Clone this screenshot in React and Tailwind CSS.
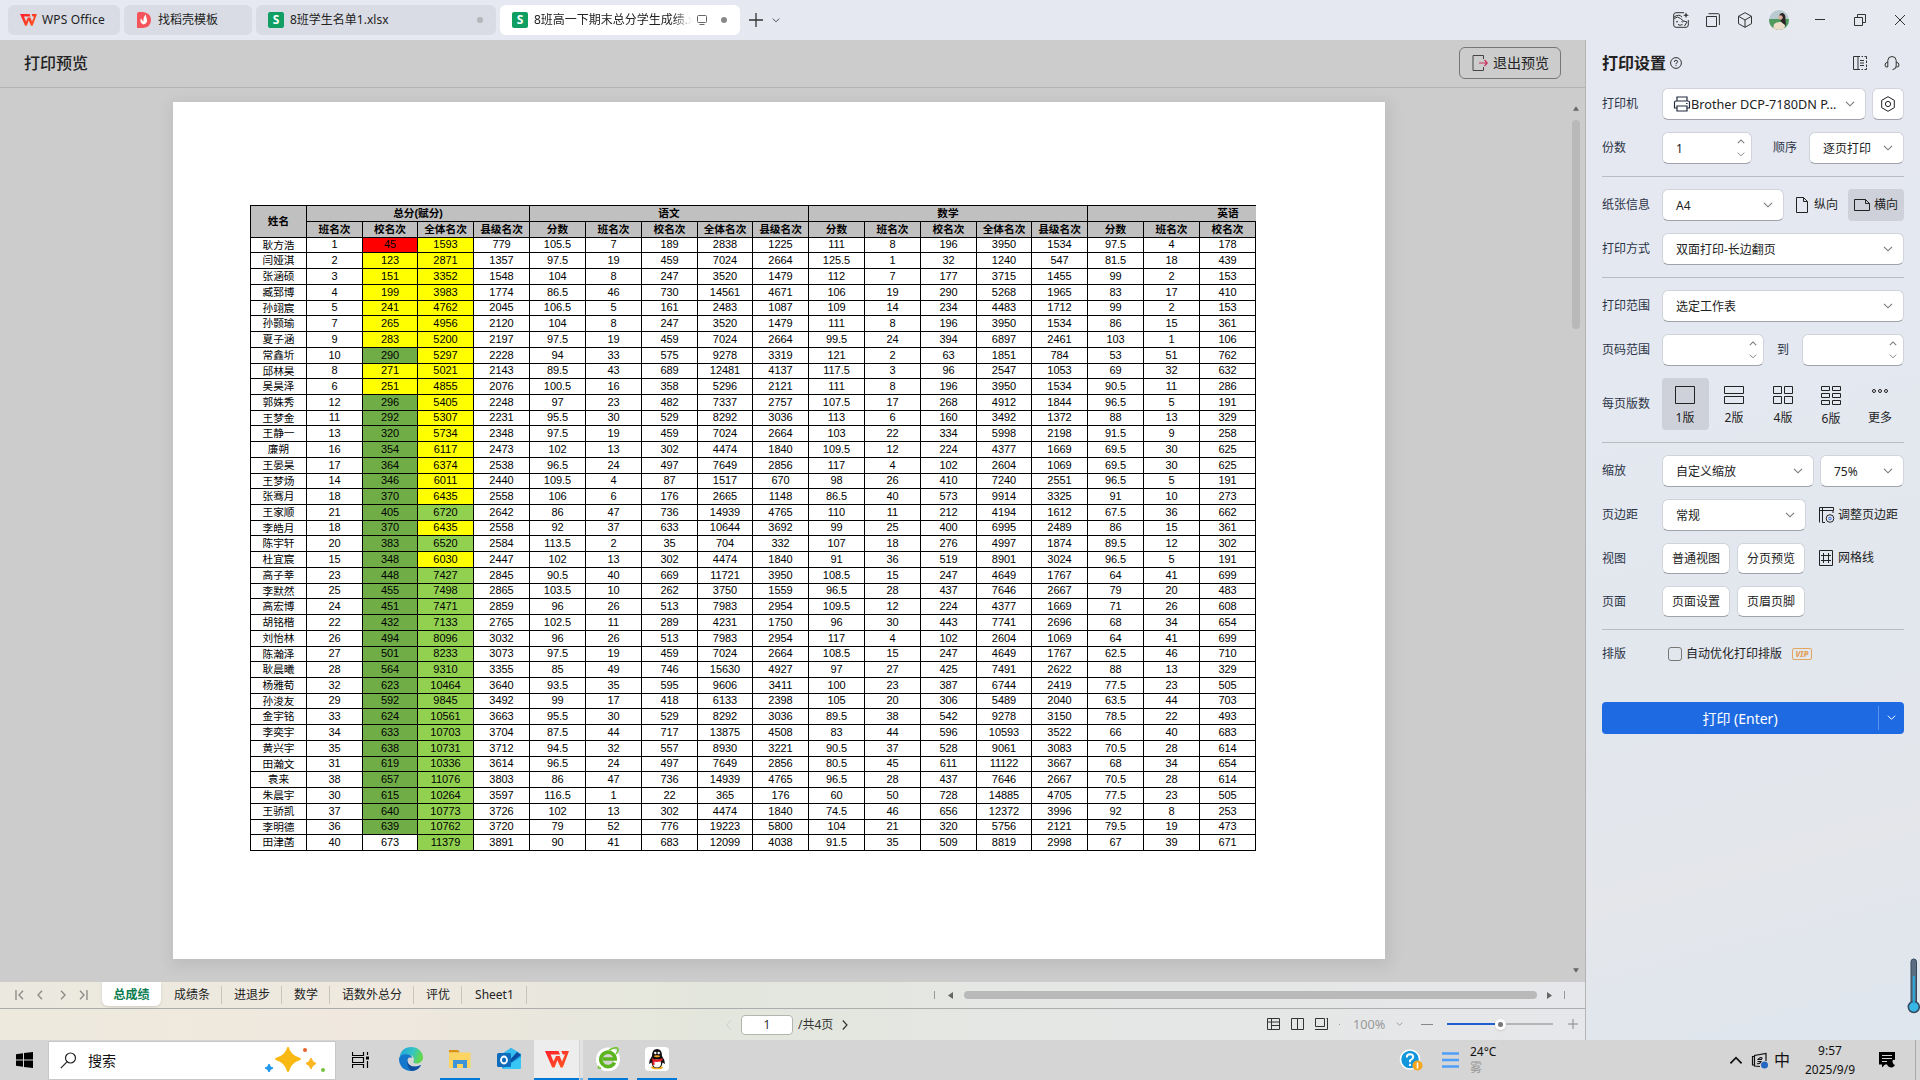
import React from "react";

const names = "耿方浩 闫娅淇 张涵硕 臧郅博 孙翊宸 孙颢瑜 夏子涵 常鑫圻 邱林昊 吴昊泽 郭姝秀 王梦金 王静一 廉朔 王晏昊 王梦炀 张骞月 王家顺 李皓月 陈宇轩 杜宜宸 高子莘 李默然 高宏博 胡铭楷 刘怡林 陈瀚泽 耿晨曦 杨雅荀 孙浚友 金宇铭 李奕宇 黄兴宇 田瀚文 袁来 朱晨宇 王骄凯 李明德 田津菡".split(" ");

const scores = `1 45 1593 779 105.5 7 189 2838 1225 111 8 196 3950 1534 97.5 4 178
2 123 2871 1357 97.5 19 459 7024 2664 125.5 1 32 1240 547 81.5 18 439
3 151 3352 1548 104 8 247 3520 1479 112 7 177 3715 1455 99 2 153
4 199 3983 1774 86.5 46 730 14561 4671 106 19 290 5268 1965 83 17 410
5 241 4762 2045 106.5 5 161 2483 1087 109 14 234 4483 1712 99 2 153
7 265 4956 2120 104 8 247 3520 1479 111 8 196 3950 1534 86 15 361
9 283 5200 2197 97.5 19 459 7024 2664 99.5 24 394 6897 2461 103 1 106
10 290 5297 2228 94 33 575 9278 3319 121 2 63 1851 784 53 51 762
8 271 5021 2143 89.5 43 689 12481 4137 117.5 3 96 2547 1053 69 32 632
6 251 4855 2076 100.5 16 358 5296 2121 111 8 196 3950 1534 90.5 11 286
12 296 5405 2248 97 23 482 7337 2757 107.5 17 268 4912 1844 96.5 5 191
11 292 5307 2231 95.5 30 529 8292 3036 113 6 160 3492 1372 88 13 329
13 320 5734 2348 97.5 19 459 7024 2664 103 22 334 5998 2198 91.5 9 258
16 354 6117 2473 102 13 302 4474 1840 109.5 12 224 4377 1669 69.5 30 625
17 364 6374 2538 96.5 24 497 7649 2856 117 4 102 2604 1069 69.5 30 625
14 346 6011 2440 109.5 4 87 1517 670 98 26 410 7240 2551 96.5 5 191
18 370 6435 2558 106 6 176 2665 1148 86.5 40 573 9914 3325 91 10 273
21 405 6720 2642 86 47 736 14939 4765 110 11 212 4194 1612 67.5 36 662
18 370 6435 2558 92 37 633 10644 3692 99 25 400 6995 2489 86 15 361
20 383 6520 2584 113.5 2 35 704 332 107 18 276 4997 1874 89.5 12 302
15 348 6030 2447 102 13 302 4474 1840 91 36 519 8901 3024 96.5 5 191
23 448 7427 2845 90.5 40 669 11721 3950 108.5 15 247 4649 1767 64 41 699
25 455 7498 2865 103.5 10 262 3750 1559 96.5 28 437 7646 2667 79 20 483
24 451 7471 2859 96 26 513 7983 2954 109.5 12 224 4377 1669 71 26 608
22 432 7133 2765 102.5 11 289 4231 1750 96 30 443 7741 2696 68 34 654
26 494 8096 3032 96 26 513 7983 2954 117 4 102 2604 1069 64 41 699
27 501 8233 3073 97.5 19 459 7024 2664 108.5 15 247 4649 1767 62.5 46 710
28 564 9310 3355 85 49 746 15630 4927 97 27 425 7491 2622 88 13 329
32 623 10464 3640 93.5 35 595 9606 3411 100 23 387 6744 2419 77.5 23 505
29 592 9845 3492 99 17 418 6133 2398 105 20 306 5489 2040 63.5 44 703
33 624 10561 3663 95.5 30 529 8292 3036 89.5 38 542 9278 3150 78.5 22 493
34 633 10703 3704 87.5 44 717 13875 4508 83 44 596 10593 3522 66 40 683
35 638 10731 3712 94.5 32 557 8930 3221 90.5 37 528 9061 3083 70.5 28 614
31 619 10336 3614 96.5 24 497 7649 2856 80.5 45 611 11122 3667 68 34 654
38 657 11076 3803 86 47 736 14939 4765 96.5 28 437 7646 2667 70.5 28 614
30 615 10264 3597 116.5 1 22 365 176 60 50 728 14885 4705 77.5 23 505
37 640 10773 3726 102 13 302 4474 1840 74.5 46 656 12372 3996 92 8 253
36 639 10762 3720 79 52 776 19223 5800 104 21 320 5756 2121 79.5 19 473
40 673 11379 3891 90 41 683 12099 4038 91.5 35 509 8819 2998 67 39 671`
  .split("\n")
  .map((l) => l.split(" "));

const shortRows = new Set([0, 4, 8, 11, 15, 18, 22, 26, 29, 33, 37]);
const colW = (i) => ([2, 8, 13].includes(i) ? "w-[55px]" : "w-[56px]");

function fill(i, v) {
  const n = Number(v);
  if (i === 1) {
    if (n < 100) return "bg-[#ff0000]";
    if (n < 290) return "bg-[#ffff00]";
    if (n < 660) return "bg-[#70ad47]";
  }
  if (i === 2) return n < 6500 ? "bg-[#ffff00]" : "bg-[#92d050]";
  return "";
}

const subs = ["班名次", "校名次", "全体名次", "县级名次", "分数", "班名次", "校名次", "全体名次", "县级名次", "分数", "班名次", "校名次", "全体名次", "县级名次", "分数", "班名次", "校名次"];

function ScoreTable() {
  const head = "flex items-center justify-center border-r border-b border-black shrink-0";
  return (
    <div className="w-[1006px] overflow-hidden border-l border-t border-black text-black text-[10.67px] leading-none whitespace-nowrap font-['Liberation_Sans','Noto_Sans_CJK_SC',sans-serif]">
      <div className="flex h-8 bg-[#c0c0c0] font-bold">
        <div className={`${head} w-[56px]`}>姓名</div>
        <div className="flex flex-col">
          <div className="flex h-4">
            <div className={`${head} w-[223px]`}>总分(赋分)</div>
            <div className={`${head} w-[279px]`}>语文</div>
            <div className={`${head} w-[279px]`}>数学</div>
            <div className="w-[168px] shrink-0 overflow-hidden border-b border-black">
              <div className="flex h-[15px] w-[280px] items-center justify-center">英语</div>
            </div>
          </div>
          <div className="flex h-4">
            {subs.map((s, i) => (
              <div key={i} className={`${head} ${colW(i + 1)}`}>{s}</div>
            ))}
          </div>
        </div>
      </div>
      {scores.map((row, r) => (
        <div key={r} className={`flex ${shortRows.has(r) ? "h-[15px]" : "h-4"}`}>
          <div className={`${head} w-[56px]`}>{names[r]}</div>
          {row.map((v, i) => (
            <div key={i} className={`${head} pb-px text-[11px] tracking-[-0.05px] ${colW(i + 1)} ${fill(i, v)}`}>{v}</div>
          ))}
        </div>
      ))}
    </div>
  );
}

const Svg = ({ w = 16, h = w, vb, className = "", children, sw = 1 }) => (
  <svg width={w} height={h} viewBox={vb || `0 0 ${w} ${h}`} fill="none" stroke="currentColor" strokeWidth={sw} className={`shrink-0 ${className}`}>
    {children}
  </svg>
);

const Down = ({ className = "text-[#777]", w = 10 }) => (
  <Svg w={w} h={w * 0.6} vb="0 0 10 6" sw={1.1} className={className}><path d="M1 .8 5 4.8 9 .8" /></Svg>
);
const Up = ({ className = "text-[#777]", w = 10 }) => (
  <Svg w={w} h={w * 0.6} vb="0 0 10 6" sw={1.3} className={className}><path d="M1 5.2 5 1.2 9 5.2" /></Svg>
);

const WLogo = ({ w, h }) => (
  <svg width={w} height={h} viewBox="0 0 24 17" className="shrink-0">
    <defs>
      <linearGradient id="wg" x1="0" y1="0" x2="1" y2="1">
        <stop offset="0" stopColor="#ff1f2d" />
        <stop offset="1" stopColor="#ff5a1f" />
      </linearGradient>
    </defs>
    <path d="M0 0H13.5L15 3.6H5.6L8.6 10.6 11 5H14.6L17 10.6 20 3.6H17.8L16.3 0H24L17.8 16.5H15.6L12.3 9.2 9.6 16.5H7.2Z" fill="url(#wg)" />
  </svg>
);

const SheetIcon = () => (
  <div className="flex h-4 w-4 shrink-0 items-center justify-center rounded-[2px] bg-[#0f9f62] text-[12px] font-bold leading-none text-white">S</div>
);

function TopBar() {
  return (
    <div className="flex h-10 shrink-0 items-center bg-[linear-gradient(90deg,#e6e9f2_0%,#e5e8f1_85%,#e6e9ee_100%)] pl-2 text-[12px] text-[#222]">
      <div className="flex h-[30px] w-[112px] items-center rounded-md bg-[#d9dce4] pl-3">
        <WLogo w={17} h={12} />
        <span className="ml-[5px] whitespace-nowrap tracking-[0.15px]">WPS Office</span>
      </div>
      <div className="ml-1 flex h-[30px] w-[128px] items-center rounded-md bg-[#d9dce4] pl-[13px]">
        <svg width="14" height="16" viewBox="0 0 14 16" className="shrink-0">
          <path d="M0 2Q0 0 2 0H6Q14 1 14 8T6 16H0Z" fill="#f4545a" />
          <path d="M6.5 12.5C3 11 3 8 4 6.5 5 8 6 9 6.5 10 6 7 7 4 9 2.6 9 5 9.5 6 10 7.5 10.5 10 9 12 6.500 12.500Z" fill="#fff" />
        </svg>
        <span className="ml-[7px]">找稻壳模板</span>
      </div>
      <div className="ml-1 flex h-[30px] w-[240px] items-center rounded-md bg-[#d9dce4] pl-3">
        <SheetIcon />
        <span className="ml-1.5">8班学生名单1.xlsx</span>
        <span className="ml-auto mr-[13px] h-1.5 w-1.5 rounded-full bg-[#b4b6bb]" />
      </div>
      <div className="ml-1 flex h-[30px] w-[240px] items-center rounded-md bg-white pl-3">
        <SheetIcon />
        <span className="ml-1.5 w-[158px] overflow-hidden whitespace-nowrap [mask-image:linear-gradient(90deg,#000_88%,transparent)]">8班高一下期末总分学生成绩.xlsx</span>
        <Svg w={12} className="ml-1 text-[#666]"><path d="M2.500 1.500h7a1 1 0 0 1 1 1v5a1 1 0 0 1-1 1h-7a1 1 0 0 1-1-1v-5a1 1 0 0 1 1-1ZM3.500 10.500h5" /></Svg>
        <span className="ml-auto mr-[13px] h-1.5 w-1.5 rounded-full bg-[#888]" />
      </div>
      <Svg w={14} className="ml-[9px] text-[#333]" sw={1.3}><path d="M7 0V14M0 7H14" /></Svg>
      <Down w={8} className="ml-[9px] text-[#333]" />
      <div className="ml-auto flex items-center text-[#333]">
        <Svg w={16}>
          <path d="M11 .7H3Q.7.7.7 3V13Q.7 15.300 3 15.300H13Q15.300 15.300 15.300 13V8M1 6.500Q5 3.500 7.500 6.500T14 10L11.500 14M1 5Q6 1.500 9 5M3 9.500Q4 10.500 5 9.500M8.500 9.500Q9.500 10.500 10.500 9.500M5 12.500Q7 14 9.500 12.500" />
          <path d="M13 .3 13.800 2.400 16 3.200 13.800 4 13 6.200 12.200 4 10 3.200 12.200 2.400Z" fill="#333" stroke="none" />
        </Svg>
        <Svg w={14} className="ml-[17px]"><path d="M.5 3.500h10v10H.5ZM2.500 .7H12.500Q13.400.7 13.400 1.600V12" /></Svg>
        <Svg w={16} className="ml-[17px]"><path d="M8 .7 14.500 4.300V11.700L8 15.300 1.500 11.700V4.300ZM1.500 4.300 8 8 14.500 4.300M8 8V15.300" /></Svg>
        <svg width="20" height="20" viewBox="0 0 20 20" className="ml-4 shrink-0">
          <defs><clipPath id="av"><circle cx="10" cy="10" r="10" /></clipPath></defs>
          <g clipPath="url(#av)">
            <rect width="20" height="20" fill="#b9cbd0" />
            <rect y="9" width="20" height="11" fill="#4f9a5e" />
            <path d="M10 8Q10 3 13.500 3 17 4 16.500 10L17 16 13 13Z" fill="#2b2326" />
            <circle cx="11.500" cy="7.500" r="2.200" fill="#d9b09c" />
            <path d="M4 20 5 14Q8 11.500 12 12L16 15 15 20Z" fill="#ecdcc8" />
          </g>
        </svg>
        <Svg w={10} className="ml-[26px]"><path d="M0 4.500H10" /></Svg>
        <Svg w={12} className="ml-[29px]"><path d="M.5 3.500h8v8h-8ZM3.500 3.500V.5H11.500V8.500H8.500" /></Svg>
        <Svg w={10} className="ml-[29px] mr-[15px]"><path d="M0 0 10 10M10 0 0 10" /></Svg>
      </div>
    </div>
  );
}

const Box = ({ className = "", children }) => (
  <div className={`flex h-full shrink-0 items-center rounded-md border border-[#d0d3da] border-b-[#a0a3aa] bg-white text-[#222] ${className}`}>{children}</div>
);
const Select = ({ className = "", children }) => (
  <Box className={`justify-between pl-[13px] pr-[10px] ${className}`}>
    <span className="whitespace-nowrap pt-px">{children}</span>
    <Down />
  </Box>
);
const Spin = ({ className = "", children }) => (
  <Box className={`justify-between pl-[13px] pr-[6px] ${className}`}>
    <span className="pt-px">{children}</span>
    <div className="flex h-full flex-col justify-between py-[6px]"><Up w={8} /><Down w={8} /></div>
  </Box>
);
const Row = ({ label, className = "mt-3 h-8", children }) => (
  <div className={`flex shrink-0 items-center ${className}`}>
    <div className="w-[60px] shrink-0 text-[#2b3447]">{label}</div>
    {children}
  </div>
);
const Line = () => <div className="mt-3 h-px w-[302px] shrink-0 bg-[#b9bcc2]" />;

function Layout({ n, active, w, children }) {
  return (
    <div className={`flex h-[52px] shrink-0 flex-col items-center rounded pt-2 ${active ? "bg-[#cfd1da]" : ""} ${w}`}>
      {children}
      <span className="mt-[7px] leading-[14px]">{n}</span>
    </div>
  );
}

function Panel() {
  return (
    <div className="flex flex-1 flex-col bg-[linear-gradient(165deg,#e6e8f1_0%,#e4e8f0_35%,#e2e7ee_60%,#e4e6ea_80%,#dee6ee_100%)] pl-4 text-[12px] leading-none text-[#222]">
      <div className="flex h-[46px] items-center">
        <span className="text-[16px] font-bold">打印设置</span>
        <Svg w={12} className="ml-1 text-[#333]"><circle cx="6" cy="6" r="5.400" /><path d="M4.300 5Q4.300 3.300 6 3.300T7.700 4.800Q7.700 5.600 6 6.400V7.200M6 8.200V9.200" /></Svg>
        <Svg w={16} className="ml-auto text-[#333]"><path d="M1.500 1.500H6V14.500H1.500ZM6 14.500H8M6 1.500H8M9.500 1.500H11M12.500 1.500H14.500V4M14.500 5.500V8M14.500 9.500V12M14.500 13V14.500H12.500M11 14.500H9.500M8 5.500H12M8 8H12M8 10.500H12" /></Svg>
        <Svg w={16} className="ml-4 mr-5 text-[#333]"><path d="M3.800 7.500V5.500Q4 1.500 8 1.500T12.200 5.500V11Q12 14.500 8.500 14.500M3.800 7.200Q1 7.500 1 10T3.800 12ZM12.200 7.200Q15 7.500 15 10T12.200 12" /></Svg>
      </div>
      <Row label="打印机" className="mt-0.5 h-8">
        <Box className="w-[204px] pl-[10px] pr-[10px] text-[12.7px]">
          <Svg w={18} h={16} className="text-[#222b3d]" sw={1.2}><path d="M4 5V1H14V5M4 12H1.500V6.500Q1.500 5 3 5H15Q16.500 5 16.500 6.500V12H14M4 10H14V15H4ZM13 7.500H14.500" /></Svg>
          <span className="whitespace-nowrap pt-px">Brother DCP-7180DN P...</span>
          <Down className="ml-auto text-[#777]" />
        </Box>
        <Box className="ml-1.5 w-8 justify-center">
          <Svg w={16}><path d="M8 .7 14.300 4.300V11.700L8 15.300 1.700 11.700V4.300Z" /><circle cx="8" cy="8" r="2.600" /></Svg>
        </Box>
      </Row>
      <Row label="份数">
        <Spin className="w-[90px]">1</Spin>
        <span className="ml-[21px] w-9 text-[#2b3447]">顺序</span>
        <Select className="w-[95px]">逐页打印</Select>
      </Row>
      <Line />
      <Row label="纸张信息">
        <Select className="w-[122px]">A4</Select>
        <Svg w={12} h={16} className="ml-3"><path d="M.5.5H7.500L11.500 4.500V15.500H.5ZM7.500.5V4.500H11.500" /></Svg>
        <span className="ml-1.5 w-[34px]">纵向</span>
        <div className="flex h-8 w-14 items-center rounded bg-[#cfd1da] pl-1.5">
          <Svg w={16} h={12}><path d="M.5.5H11.500L15.500 4.500V11.500H.5ZM11.500.5V4.500H15.500" /></Svg>
          <span className="ml-1">横向</span>
        </div>
      </Row>
      <Row label="打印方式"><Select className="w-[242px]">双面打印-长边翻页</Select></Row>
      <Line />
      <Row label="打印范围"><Select className="w-[242px]">选定工作表</Select></Row>
      <Row label="页码范围">
        <Spin className="w-[102px]" />
        <span className="ml-[13px] w-[25px] text-[#2b3447]">到</span>
        <Spin className="w-[102px]" />
      </Row>
      <Row label="每页版数" className="mt-3 h-[52px]">
        <Layout n="1版" active w="w-[47px] pr-px"><Svg w={20} h={18}><path d="M.5.5h19v17H.5Z" /></Svg></Layout>
        <Layout n="2版" w="w-[50px]"><Svg w={20} h={18}><path d="M.5.5h19v7H.5ZM.5 10.500h19v7H.5Z" /></Svg></Layout>
        <Layout n="4版" w="w-[48px]"><Svg w={20} h={18}><path d="M.5.5h8v7h-8ZM11.500.5h8v7h-8ZM.5 10.500h8v7h-8ZM11.500 10.500h8v7h-8Z" /></Svg></Layout>
        <Layout n="6版" w="w-[48px]"><Svg w={20} h={19}><path d="M.5.5h8v4h-8ZM11.500.5h8v4h-8ZM.5 7.500h8v4h-8ZM11.500 7.500h8v4h-8ZM.5 14.500h8v4h-8ZM11.500 14.500h8v4h-8Z" /></Svg></Layout>
        <Layout n="更多" w="w-[50px]"><Svg w={18} h={18}><circle cx="3" cy="5" r="1.500" /><circle cx="9" cy="5" r="1.500" /><circle cx="15" cy="5" r="1.500" /></Svg></Layout>
      </Row>
      <Line />
      <Row label="缩放">
        <Select className="w-[152px]">自定义缩放</Select>
        <Select className="ml-1.5 w-[84px]">75%</Select>
      </Row>
      <Row label="页边距">
        <Select className="w-[144px]">常规</Select>
        <Svg w={16} className="ml-[13px]"><path d="M.5 3.500H14.500V.5H.5V15.500M3.500.5V15.500H6M14 3.500V6" /><circle cx="11" cy="11.500" r="3.800" /><circle cx="11" cy="11.500" r="1.300" stroke="#3b6de0" /></Svg>
        <span className="ml-[3px]">调整页边距</span>
      </Row>
      <Row label="视图" className="mt-3 h-[31px]">
        <Box className="w-[68px] justify-center">普通视图</Box>
        <Box className="ml-[7px] w-[68px] justify-center">分页预览</Box>
        <Svg w={14} h={16} className="ml-[14px] mb-px"><path d="M.5.5h13v15H.5ZM4.500 3V13M9.500 3V13M2 5.500H12M2 10.500H12" /></Svg>
        <span className="ml-[5px] mb-px">网格线</span>
      </Row>
      <Row label="页面" className="mt-3 h-[31px]">
        <Box className="w-[68px] justify-center">页面设置</Box>
        <Box className="ml-[7px] w-[68px] justify-center">页眉页脚</Box>
      </Row>
      <Line />
      <Row label="排版" className="mt-3 h-6">
        <div className="ml-1.5 h-[14px] w-[14px] rounded-[3px] border border-[#777]" />
        <span className="ml-1">自动优化打印排版</span>
        <span className="ml-2.5 flex h-3 w-5 items-center justify-center rounded-[2px] border border-[#e3a661] text-[8px] font-extrabold italic text-[#e3a05a]">VIP</span>
      </Row>
      <div className="mt-9 flex h-8 w-[302px] shrink-0 items-center rounded bg-[#1e6ae2] text-[14px] text-white">
        <span className="flex-1 pt-px text-center">打印 (Enter)</span>
        <div className="h-6 w-px bg-[#5b93ec]" />
        <div className="flex w-[25px] justify-center"><Down w={9} className="text-white" /></div>
      </div>
    </div>
  );
}

const tabs = ["成绩条", "进退步", "数学", "语数外总分", "评优", "Sheet1"];

function SheetTabs() {
  return (
    <div className="flex h-[27px] shrink-0 border-b border-[#adadad] bg-[linear-gradient(90deg,#ebe9df_0%,#efe9df_25%,#e3e6dc_45%,#e4e7e4_65%,#e6e7ea_100%)] text-[12px] leading-none text-[#222]">
      <div className="flex h-[25px] w-[102px] items-center pl-[15px] text-[#8d8d88]">
        <Svg w={9} h={10} sw={1.4}><path d="M1 0V10M8 .8 4 5 8 9.200" /></Svg>
        <Svg w={6} h={10} className="ml-[13px]" sw={1.4}><path d="M5 .8 1 5 5 9.200" /></Svg>
        <Svg w={6} h={10} className="ml-[17px]" sw={1.4}><path d="M1 .8 5 5 1 9.200" /></Svg>
        <Svg w={9} h={10} className="ml-[13px]" sw={1.4}><path d="M8 0V10M1 .8 5 5 1 9.200" /></Svg>
      </div>
      <div className="flex h-[24px] w-[59px] items-center justify-center rounded-b-md bg-white pt-px font-bold text-[#0a7d50] shadow-sm">总成绩</div>
      <div className="ml-px flex h-[26px] items-center">
        {tabs.map((t) => (
          <div key={t} className="flex h-[18px] items-center whitespace-nowrap border-r border-[#c6c6bf] pl-3 pr-[11px] last:pl-[13px] last:pr-3">{t}</div>
        ))}
      </div>
      <div className="ml-auto mr-5 flex h-[26px] items-center text-[#666]">
        <div className="h-2 w-px bg-[#999]" />
        <svg width="5" height="7" viewBox="0 0 5 7" className="ml-[13px]"><path d="M5 0V7L0 3.500Z" fill="#666" /></svg>
        <div className="ml-[11px] h-2 w-[573px] rounded-full bg-[#b9b9b9]" />
        <svg width="5" height="7" viewBox="0 0 5 7" className="ml-[10px]"><path d="M0 0V7L5 3.500Z" fill="#666" /></svg>
        <div className="ml-[12px] h-2 w-px bg-[#999]" />
      </div>
    </div>
  );
}

function StatusBar() {
  return (
    <div className="flex h-[31px] shrink-0 items-center bg-[linear-gradient(90deg,#ede9dd_0%,#f0e8de_22%,#e3e6dc_45%,#e4e7e4_65%,#e6e7ea_100%)] pl-[726px] text-[12px] leading-none text-[#333]">
      <Svg w={5} h={10} className="text-[#ccc]"><path d="M4.500.5.8 5 4.500 9.500" /></Svg>
      <div className="ml-2.5 flex h-5 w-[52px] items-center justify-center rounded-sm border border-[#b5b5b0] bg-white">1</div>
      <span className="ml-[5px]">/共4页</span>
      <Svg w={6} h={10} className="ml-[9px]" sw={1.2}><path d="M.8.5 5 5 .8 9.500" /></Svg>
      <div className="ml-auto flex items-center">
        <Svg w={13} h={12}><path d="M.5.5h12v11H.5ZM.5 4H12.500M4.500.5V11.500M4.500 7.500H12.500" /></Svg>
        <Svg w={13} h={12} className="ml-[11px]"><path d="M.5.5h12v11H.5ZM6.500.5V11.500" /></Svg>
        <Svg w={13} h={12} className="ml-[11px]"><path d="M.5.5h9v8h-9ZM12.500 0V11.500H0M11.500.5H13" /></Svg>
        <div className="ml-[11px] h-px w-px bg-[#999]" />
        <span className="ml-[13px] w-[33px] text-[12.7px] text-[#999]">100%</span>
        <Down w={7} className="ml-[10px] text-[#888]" />
        <div className="ml-[18px] h-px w-3 bg-[#888]" />
        <div className="ml-3.5 flex w-[106px] items-center">
          <div className="h-0.5 w-12 bg-[#1f5fd0]" />
          <div className="flex h-[11px] w-[11px] items-center justify-center rounded-full bg-white shadow"><div className="h-[5px] w-[5px] rounded-full bg-[#777]" /></div>
          <div className="h-0.5 flex-1 bg-[#b5b5b5]" />
        </div>
        <Svg w={10} className="ml-[15px] mr-[7px] text-[#888]"><path d="M5 0V10M0 5H10" /></Svg>
      </div>
    </div>
  );
}

function TaskButton({ w, active, open, children }) {
  return (
    <div className={`flex h-10 flex-col items-center ${w} ${active ? "bg-[#ededed]" : ""}`}>
      <div className="flex flex-1 items-center">{children}</div>
      <div className={`h-0.5 w-full ${open ? "bg-[#0078d7]" : ""}`} />
    </div>
  );
}

function Taskbar() {
  return (
    <div className="flex h-10 shrink-0 items-center bg-[#d5d5d5] pl-4 text-[12px] leading-none text-[#111]">
      <svg width="17" height="16" viewBox="0 0 17 16" className="shrink-0"><path d="M0 2.300 7 1.300V7.500H0ZM8 1.100 17 0V7.500H8ZM0 8.500H7V14.700L0 13.700ZM8 8.500H17V16L8 14.900Z" fill="#000" /></svg>
      <div className="ml-[15px] flex h-[39px] w-[288px] items-center border border-[#c8c8c8] bg-white pl-[11px]">
        <Svg w={17} className="text-[#222]" sw={1.2}><circle cx="10.500" cy="6" r="5" /><path d="M7 9.800.8 16.200" /></Svg>
        <span className="ml-[11px] pt-px text-[14px]">搜索</span>
        <svg width="64" height="28" viewBox="0 0 64 28" className="ml-auto mr-[7px]">
          <path d="M24 2Q26 10 36 13 26 16 24 25 22 16 12 13 22 10 24 2Z" fill="#f8b912" stroke="#f8b912" strokeWidth="2" strokeLinejoin="round" />
          <path d="M47 12Q48 16 52 17.500 48 19 47 23 46 19 42 17.500 46 16 47 12Z" fill="#fbb51e" stroke="#fbb51e" strokeLinejoin="round" />
          <path d="M5 18 6.500 21 9 22 6.500 23.500 5 26 3.500 23.500 1 22 3.500 21Z" fill="#2196ea" stroke="#2196ea" strokeLinejoin="round" />
          <circle cx="41" cy="4" r="2" fill="#e8622e" /><circle cx="59" cy="24" r="2" fill="#79c142" />
        </svg>
      </div>
      <Svg w={17} h={16} className="ml-[16px] text-black" sw={1.2}><path d="M.5 0V3.500H11.500V0M.5 5.500H11.500V10.500H.5ZM.5 16V12.500H11.500V16M15.500 0V3M15.500 9V16" /><path d="M14 4.500h3v3h-3Z" fill="#000" stroke="none" /></Svg>
      <div className="ml-[18px] flex">
        <TaskButton w="w-12">
          <svg width="24" height="24" viewBox="0 0 24 24">
            <defs>
              <linearGradient id="ed" x1="0" y1="0" x2="1" y2="0.300"><stop offset="0" stopColor="#1c9fe0" /><stop offset=".6" stopColor="#35c4c4" /><stop offset="1" stopColor="#62d84e" /></linearGradient>
            </defs>
            <path d="M.5 10.500C1.500 4 6 0 12 0 19 0 24 5 24 10.500 24 14 21 16.500 17.500 16.500 15 16.500 14 15.500 14.500 14.500 16 12 14 8 9.500 7.800 5 7.700 1.500 9 .5 10.500Z" fill="url(#ed)" />
            <path d="M0 12C.5 8.500 4 6.800 8 7.200 12 7.600 13.500 10 12.500 11 10 9.500 8 12 8.500 15 9.500 19.500 15 21.500 22 18 20 22 16 24 12 24 5 24 0 19 0 12Z" fill="#1377cc" />
            <path d="M8.500 13C7 18 11 24 13 24 17 23.500 20.500 21.500 22 18 15 21.500 8.500 19 8.500 13Z" fill="#0d4f9e" />
          </svg>
        </TaskButton>
        <div className="w-[5px]" />
        <TaskButton w="w-10" open>
          <svg width="22" height="20" viewBox="0 0 22 20"><path d="M0 1H9L11 3.500H0Z" fill="#d9930d" /><path d="M0 3.500H21.500V19H0Z" fill="#fcd462" /><path d="M4 19V11H18V19H14V15H8V19Z" fill="#3f94d8" /></svg>
        </TaskButton>
        <div className="w-[5px]" />
        <TaskButton w="w-12">
          <svg width="24" height="24" viewBox="0 0 24 24"><path d="M5 7 14 1 24 7V20Q24 22 22 22H7Q5 22 5 20Z" fill="#1b9de2" /><path d="M8 5 14 1 24 7 14 15 8 11Z" fill="#35bdf0" /><path d="M24 8 12 17V14L20 5Z" fill="#0a4da2" /><path d="M5 22 24 10V20Q24 22 22 22Z" fill="#38c6f4" /><rect y="6" width="14" height="14" rx="1.500" fill="#0f6cbd" /><ellipse cx="7" cy="13" rx="3" ry="3.500" fill="none" stroke="#fff" strokeWidth="1.800" /></svg>
        </TaskButton>
        <TaskButton w="w-[45px] ml-px" active open><WLogo w={24} h={17} /></TaskButton>
        <div className="ml-px flex h-10 w-[3px] flex-col justify-end bg-[#e2e2e2]"><div className="h-0.5 bg-[#76b4e6]" /></div>
        <div className="w-[5px]" />
        <TaskButton w="w-10" open>
          <svg width="24" height="24" viewBox="0 0 24 24"><circle cx="12" cy="12.500" r="9" fill="none" stroke="#fff" strokeWidth="6" /><path d="M18.500 15.500A7.200 7.200 0 1 1 19.200 12H7" fill="none" stroke="#5cb51f" strokeWidth="3.600" /><path d="M3 19Q1 22 5 21M13 3Q21-1 22 2 22.500 4 20 7" fill="none" stroke="#6cc52a" strokeWidth="1.500" /></svg>
        </TaskButton>
        <div className="w-[9px]" />
        <TaskButton w="w-10" open>
          <svg width="24" height="24" viewBox="0 0 24 24"><rect width="24" height="24" rx="4" fill="#fff" /><ellipse cx="12" cy="20.500" rx="6" ry="1.700" fill="#f7a81b" /><path d="M7 9Q7 2 12 2T17 9Q20 13 20 17L17.500 15.500Q17 21 12 21T6.500 15.500L4 17Q4 13 7 9Z" fill="#111" /><ellipse cx="12" cy="16.500" rx="4" ry="4" fill="#fff" /><path d="M6.500 11Q12 14 17.500 11V13.500Q12 16 9.500 14.500V18H7.500V13.500Z" fill="#e6202a" /><circle cx="10.300" cy="6" r="1.200" fill="#fff" /><circle cx="13.700" cy="6" r="1.200" fill="#fff" /><ellipse cx="12" cy="9.300" rx="3" ry="1" fill="#f7a81b" /></svg>
        </TaskButton>
      </div>
      <div className="ml-auto flex h-10 items-center">
        <svg width="24" height="22" viewBox="0 0 24 22"><circle cx="11" cy="10.500" r="9.500" fill="#1296db" stroke="#fff" strokeWidth="1.600" /><path d="M7.800 8.500Q7.800 5.300 11 5.300T14.200 8.200Q14.200 9.700 11 11.500V13.200M11 14.800V17" fill="none" stroke="#fff" strokeWidth="2" /><circle cx="18.500" cy="16.500" r="5" fill="#f6a51c" /><path d="M18.500 13.500V19.500" stroke="#fff" strokeWidth="1.600" /></svg>
        <svg width="17" height="16" viewBox="0 0 17 16" className="ml-[19px]"><path d="M0 1.500H17M0 8H17M0 14.500H17" stroke="#4d9ff8" strokeWidth="2.600" /></svg>
        <div className="ml-[11px] flex w-[258px] flex-col gap-1"><span>24°C</span><span className="text-[#999]">雾</span></div>
        <Up w={14} className="ml-px text-[#111]" />
        <svg width="18" height="17" viewBox="0 0 18 17" fill="none" stroke="#111" strokeWidth="1.200" className="ml-2"><path d="M15 9V1.500L3.500 3.500V14L9 14.500M3.500 4.500H1.500V13H3.500M11.500 6.500Q9 4.500 7 7.500H11M6.500 9.500H10Q8.500 12.500 6 11.500" /><circle cx="13.500" cy="13" r="3.500" fill="#2468c0" stroke="none" /></svg>
        <span className="ml-[5px] w-4 text-[16px]">中</span>
        <div className="ml-2 flex w-16 flex-col items-center gap-[7px]"><span>9:57</span><span>2025/9/9</span></div>
        <svg width="17" height="16" viewBox="0 0 17 16" className="ml-[17px]"><path d="M0 0H16V8Q12 7 10 12.500H6L3 15.500V12.500H0Z" fill="#000" /><path d="M3 3.500H13M3 6.500H13M3 9.500H8" stroke="#d5d5d5" strokeWidth="1.100" /><path d="M14 7.500A4.200 4.200 0 1 0 16 13 4 4 0 0 1 14 7.500Z" fill="#000" /></svg>
        <div className="ml-[19px] mr-1 h-10 w-px bg-[#a8a8a8]" />
      </div>
    </div>
  );
}

export default function App() {
  return (
    <div className="relative flex h-[1080px] w-[1920px] flex-col overflow-hidden bg-[#ccc] font-['Noto_Sans','Noto_Sans_CJK_SC',sans-serif]">
      <TopBar />
      <div className="flex h-[1000px]">
        <div className="flex w-[1586px] shrink-0 flex-col border-r border-[#b3b3b3]">
          <div className="flex h-12 shrink-0 items-center justify-between border-b border-[#b3b3b3] pb-px pl-6 pr-6 text-[#222]">
            <span className="text-[16px] font-medium leading-none">打印预览</span>
            <div className="flex h-8 w-[102px] items-center rounded-md border border-[#777] pl-3 text-[14px] leading-none">
              <Svg w={16} className="text-[#444]"><path d="M11.500 4V.5H1V15.500H11.500V12" /><path d="M7 8H15M12.500 5 15.200 8 12.500 11" stroke="#c8325a" strokeWidth="1.200" /></Svg>
              <span className="ml-[5px] whitespace-nowrap">退出预览</span>
            </div>
          </div>
          <div className="flex h-[894px] justify-between pl-[173px] pr-[3px]">
            <div className="mt-[14px] h-[857px] w-[1212px] bg-white pl-[77px] pt-[103px] shadow-[2px_4px_14px_4px_rgba(0,0,0,0.070)]">
              <ScoreTable />
            </div>
            <div className="flex w-3 flex-col items-center pt-[18px]">
              <svg width="6" height="5" viewBox="0 0 7 5"><path d="M3.500 0 7 5H0Z" fill="#666" /></svg>
              <div className="mt-[9px] h-[209px] w-2 rounded-full bg-[#b9b9b9]" />
              <svg width="6" height="5" viewBox="0 0 7 5" className="mt-auto mb-[9px]"><path d="M0 0H7L3.500 5Z" fill="#666" /></svg>
            </div>
          </div>
          <SheetTabs />
          <StatusBar />
        </div>
        <Panel />
      </div>
      <Taskbar />
      <svg width="14" height="56" viewBox="0 0 14 56" className="absolute left-[1907px] top-[958px]">
        <rect x="4" y="1" width="5.500" height="46" rx="2.700" fill="#5b6d80" stroke="#34495e" />
        <circle cx="6.800" cy="49" r="5.500" fill="#38b6e6" stroke="#34495e" strokeWidth="1.500" />
        <path d="M6.800 18V46" stroke="#29abe2" strokeWidth="2" />
      </svg>
    </div>
  );
}
